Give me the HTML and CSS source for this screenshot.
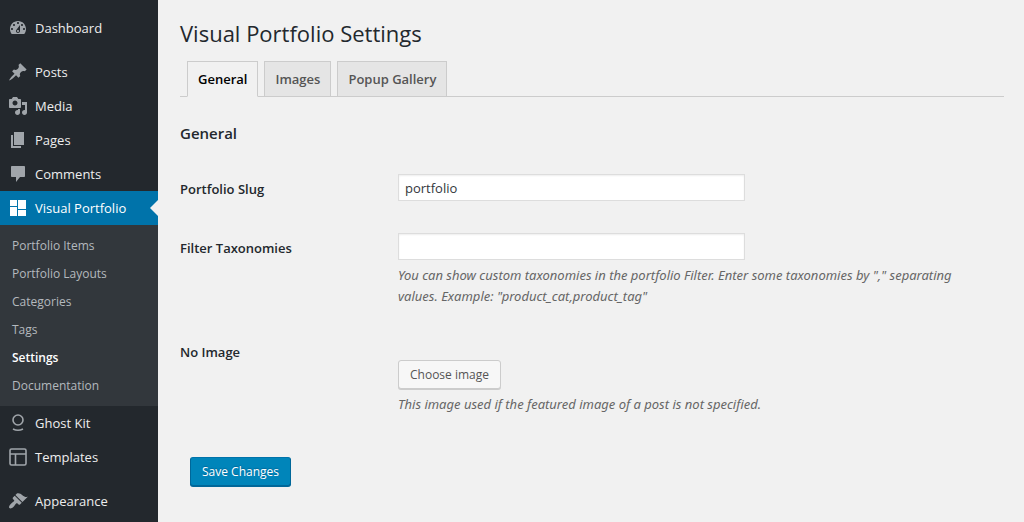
FILE: index.html
```html
<!DOCTYPE html>
<html lang="en">
<head>
    <meta charset="UTF-8">
    <meta name="viewport" content="width=device-width, initial-scale=1.0">
    <title>Visual Portfolio Settings</title>
    <link rel="stylesheet" href="styles.css">
</head>
<body>
    <nav class="sidebar">
        <ul class="menu">
            <li>
                <a href="#">
                    <svg viewBox="0 0 20 20"><path fill-rule="evenodd" d="M3.76 16h12.48c1.1-1.37 1.76-3.11 1.76-5 0-4.42-3.58-8-8-8s-8 3.58-8 8c0 1.89.66 3.63 1.76 5zM10 4c.55 0 1 .45 1 1s-.45 1-1 1-1-.45-1-1 .45-1 1-1zM6 6c.55 0 1 .45 1 1s-.45 1-1 1-1-.45-1-1 .45-1 1-1zm8 0c.55 0 1 .45 1 1s-.45 1-1 1-1-.45-1-1 .45-1 1-1zm-5.37 5.55L12 7v6c0 1.1-.9 2-2 2s-2-.9-2-2c0-.57.24-1.08.63-1.45zM4 10c.55 0 1 .45 1 1s-.45 1-1 1-1-.45-1-1 .45-1 1-1zm12 0c.55 0 1 .45 1 1s-.45 1-1 1-1-.45-1-1 .45-1 1-1zm-5 3c0-.55-.45-1-1-1s-1 .45-1 1 .45 1 1 1 1-.45 1-1z"/></svg>
                    Dashboard
                </a>
            </li>
            <li class="separated">
                <a href="#">
                    <svg viewBox="0 0 20 20"><path d="M10.44 3.02l1.82-1.82 6.36 6.35-1.83 1.82c-1.05-.68-2.48-.57-3.41.36l-.75.75c-.92.93-1.04 2.35-.35 3.41l-1.83 1.82-2.41-2.41-2.8 2.79c-.42.42-3.38 2.71-3.8 2.29s1.86-3.39 2.28-3.81l2.79-2.79L4.1 9.36l1.83-1.82c1.05.69 2.48.57 3.4-.36l.75-.75c.93-.92 1.05-2.35.36-3.41z"/></svg>
                    Posts
                </a>
            </li>
            <li>
                <a href="#">
                    <svg viewBox="0 0 20 20"><path fill-rule="evenodd" d="M13 11V4c0-.55-.45-1-1-1h-1.67L9 1H5L3.67 3H2c-.55 0-1 .45-1 1v7c0 .55.45 1 1 1h10c.55 0 1-.45 1-1zM7 4.5c1.38 0 2.5 1.12 2.5 2.5S8.38 9.5 7 9.5 4.5 8.38 4.5 7 5.62 4.5 7 4.5zM14 6h5v10.5c0 1.38-1.12 2.5-2.5 2.5S14 17.88 14 16.5s1.12-2.5 2.5-2.5c.17 0 .34.02.5.05V9h-3V6zm-4 8.05V13h2v3.5c0 1.38-1.12 2.5-2.5 2.5S7 17.88 7 16.5 8.12 14 9.5 14c.17 0 .34.02.5.05z"/></svg>
                    Media
                </a>
            </li>
            <li>
                <a href="#">
                    <svg viewBox="0 0 20 20"><path d="M6 15V2h10v13H6zm-1 1h8v2H3V5h2v11z"/></svg>
                    Pages
                </a>
            </li>
            <li>
                <a href="#">
                    <svg viewBox="0 0 20 20"><path d="M4 2h12c.55 0 1 .45 1 1v9c0 .55-.45 1-1 1h-4l-4 5v-5H4c-.55 0-1-.45-1-1V3c0-.55.45-1 1-1z"/></svg>
                    Comments
                </a>
            </li>
            <li>
                <a href="#" class="current">
                    <svg viewBox="0 0 20 20"><path d="M2 2h7v6H2zM2 9h7v9H2zM10 2h8v9h-8zM10 12h8v6h-8z"/></svg>
                    Visual Portfolio
                </a>
                <ul class="submenu">
                    <li><a href="#">Portfolio Items</a></li>
                    <li><a href="#">Portfolio Layouts</a></li>
                    <li><a href="#">Categories</a></li>
                    <li><a href="#">Tags</a></li>
                    <li><a href="#" class="active">Settings</a></li>
                    <li><a href="#">Documentation</a></li>
                </ul>
            </li>
            <li>
                <a href="#">
                    <svg class="outline" viewBox="0 0 20 20"><circle cx="10" cy="7" r="5"/><path d="M5 16q5 2.600 10 0"/></svg>
                    Ghost Kit
                </a>
            </li>
            <li>
                <a href="#">
                    <svg class="outline" viewBox="0 0 20 20"><rect x="2" y="2" width="16" height="16" rx="1.500"/><path d="M2 7h16M7.500 7v11"/></svg>
                    Templates
                </a>
            </li>
            <li class="separated">
                <a href="#">
                    <svg viewBox="0 0 20 20"><path d="M14.480 11.060L7.410 3.990l1.500-1.500c.5-.56 2.300-.47 3.510.32 1.210.8 1.430 1.280 2.910 2.100 1.180.64 2.450 1.260 4.450.85zm-.71.71L6.700 4.700 4.930 6.470c-.39.39-.39 1.020 0 1.410l1.060 1.060c.39.39.39 1.030 0 1.420-.6.6-1.430 1.110-2.210 1.690-.35.26-.7.53-1.010.84C1.430 14.230.4 16.080 1.400 17.070c.99 1 2.840-.03 4.180-1.360.31-.31.58-.66.85-1.020.57-.78 1.080-1.610 1.690-2.210.39-.39 1.020-.39 1.410 0l1.060 1.060c.39.39 1.020.39 1.410 0z"/></svg>
                    Appearance
                </a>
            </li>
        </ul>
    </nav>

    <main class="content">
        <h1>Visual Portfolio Settings</h1>
        <div class="tabs">
            <a href="#general" class="tab tab-active">General</a>
            <a href="#images" class="tab">Images</a>
            <a href="#popup" class="tab">Popup Gallery</a>
        </div>

        <form id="general">
            <h2>General</h2>
            <div class="row">
                <label for="slug">Portfolio Slug</label>
                <div class="field">
                    <input type="text" id="slug" value="portfolio">
                </div>
            </div>
            <div class="row">
                <label for="taxonomies">Filter Taxonomies</label>
                <div class="field">
                    <input type="text" id="taxonomies">
                    <p class="description">You can show custom taxonomies in the portfolio Filter. Enter some taxonomies by "," separating values. Example: "product_cat,product_tag"</p>
                </div>
            </div>
            <div class="row row-image">
                <label for="no-image">No Image</label>
                <div class="field">
                    <button type="button" id="no-image" class="button">Choose image</button>
                    <p class="description">This image used if the featured image of a post is not specified.</p>
                </div>
            </div>
            <button type="submit" class="button button-primary">Save Changes</button>
        </form>
    </main>
</body>
</html>
```
FILE: styles.css
```css
* {
    box-sizing: border-box;
}
body {
    margin: 0;
    min-height: 100vh;
    display: flex;
    background-color: #f1f1f1;
    color: #23282d;
    font-family: "Open Sans", "Noto Sans", sans-serif;
    font-size: 13px;
    line-height: 21px;
}
a {
    text-decoration: none;
}

/* Sidebar */
.sidebar {
    flex: 0 0 158px;
    background-color: #23282d;
}
.menu,
.submenu {
    list-style: none;
    margin: 0;
    padding: 0;
}
.menu {
    padding-top: 11px;
}
.menu a {
    display: flex;
    align-items: center;
    gap: 7px;
    height: 34px;
    padding-left: 8px;
    color: #eee;
    white-space: nowrap;
}
.menu svg {
    width: 20px;
    height: 20px;
    fill: #a0a5aa;
}
.menu svg.outline {
    fill: none;
    stroke: #a0a5aa;
    stroke-width: 1.6;
}
.separated {
    margin-top: 10px;
}
.menu .current {
    position: relative;
    background-color: #0073aa;
    color: #fff;
}
.menu .current svg {
    fill: #fff;
}
.current::after {
    content: "";
    position: absolute;
    right: 0;
    top: 9px;
    border: 8px solid transparent;
    border-left-width: 0;
    border-right-color: #f1f1f1;
}
.submenu {
    padding: 6px 0 7px;
    background-color: #32373c;
}
.submenu a {
    height: 28px;
    padding-left: 12px;
    color: #b4b9be;
    font-size: 12px;
}
.submenu .active {
    color: #fff;
    font-weight: 600;
}

/* Settings page */
.content {
    flex: 1;
    min-width: 0;
    padding: 17px 20px 36px 22px;
}
h1 {
    margin: 0 0 12px;
    font-size: 22px;
    font-weight: 400;
    line-height: 32px;
}
.tabs {
    display: flex;
    gap: 6px;
    padding-left: 7px;
    border-bottom: 1px solid #ccc;
}
.tab {
    margin-bottom: -1px;
    padding: 7px 10px 6px;
    border: 1px solid #ccc;
    background-color: #e5e5e5;
    color: #555;
    font-weight: 600;
}
.tab-active {
    border-bottom-color: #f1f1f1;
    background-color: #f1f1f1;
    color: #000;
}
h2 {
    margin: 26px 0 30px;
    font-size: 15px;
    font-weight: 600;
}
form {
    display: flex;
    flex-direction: column;
    align-items: flex-start;
}
.row {
    display: flex;
    width: 100%;
    margin-bottom: 32px;
}
.row label {
    flex: 0 0 218px;
    padding-top: 5px;
    font-weight: 600;
}
.row-image {
    margin: -2px 0 42px;
}
.row-image .field {
    padding-top: 23px;
}
.field {
    flex: 1;
    padding-right: 10px;
}
.field input {
    display: block;
    width: 347px;
    max-width: 100%;
    height: 27px;
    padding: 3px 6px;
    border: 1px solid #ddd;
    background-color: #fff;
    box-shadow: inset 0 1px 2px rgba(0, 0, 0, 0.07);
    color: #32373c;
    font: inherit;
}
.description {
    margin: 5px 0 0;
    color: #666;
    font-family: "Noto Sans", "Open Sans", sans-serif;
    font-style: italic;
}
.button {
    display: block;
    height: 29px;
    padding: 0 11px;
    border: 1px solid #ccc;
    border-radius: 3px;
    background-color: #f7f7f7;
    box-shadow: 0 1px 0 #ccc;
    color: #555;
    font: inherit;
    font-size: 12px;
    cursor: pointer;
}
.button-primary {
    margin-left: 10px;
    border-color: #0073aa #006799 #006799;
    background-color: #0085ba;
    box-shadow: 0 1px 0 #006799;
    color: #fff;
    text-shadow: 0 -1px 1px #006799;
}
```
